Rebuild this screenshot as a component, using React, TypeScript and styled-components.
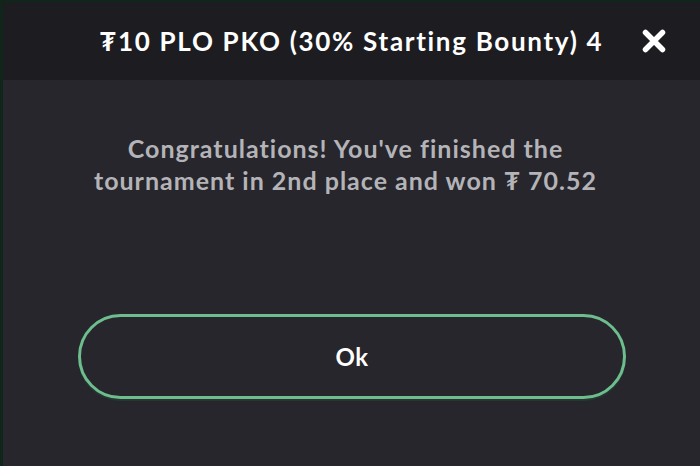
import React from "react";
import styled, { createGlobalStyle } from "styled-components";

const Global = createGlobalStyle`
  html, body { margin: 0; padding: 0; background: #0f2418; }
  body { font-family: Lato, "Noto Sans", sans-serif; -webkit-font-smoothing: antialiased; }
  * { box-sizing: border-box; }
`;

const Backdrop = styled.div`
  width: 700px;
  height: 466px;
  padding: 2px 0 0 3px;
  background: #10261a;
  overflow: hidden;
`;

const Modal = styled.div`
  width: 100%;
  height: 100%;
  display: flex;
  flex-direction: column;
  background: #26262c;
`;

const Header = styled.div`
  height: 78px;
  flex: none;
  display: grid;
  grid-template-columns: 1fr auto 1fr;
  align-items: center;
  background: #1c1c21;
`;

const Title = styled.h1`
  grid-column: 2;
  margin: 0;
  color: #ffffff;
  font-family: Lato, "Noto Sans", sans-serif;
  font-weight: 700;
  font-size: 26px;
  letter-spacing: 1.7px;
  white-space: nowrap;
`;

const CloseButton = styled.button`
  grid-column: 3;
  justify-self: start;
  margin-left: 38px;
  width: 26px;
  height: 26px;
  padding: 0;
  border: none;
  background: transparent;
  display: flex;
  align-items: center;
  justify-content: center;
  cursor: pointer;
`;

const Body = styled.div`
  flex: 1;
  display: flex;
  flex-direction: column;
  align-items: center;
  padding: 52px 40px 0 40px;
`;

const Message = styled.p`
  margin: 0 12px 0 0;
  color: #b4b4b8;
  font-family: Lato, "Noto Sans", sans-serif;
  font-weight: 700;
  font-size: 25px;
  letter-spacing: 1px;
  line-height: 32px;
  text-align: center;
  width: 530px;
`;

const OkButton = styled.button`
  margin-top: 118px;
  width: 548px;
  height: 85px;
  border: 3px solid #6dbd8e;
  border-radius: 43px;
  background: #26262c;
  color: #ffffff;
  font-family: Lato, "Noto Sans", sans-serif;
  font-weight: 700;
  font-size: 24px;
  letter-spacing: 0.5px;
  box-shadow: 0 2px 1px rgba(40, 90, 60, 0.35);
  cursor: pointer;
  margin-left: 1px;
`;

export default function App() {
  return (
    <>
      <Global />
      <Backdrop>
        <Modal>
          <Header>
            <Title>₮10 PLO PKO (30% Starting Bounty) 4</Title>
            <CloseButton aria-label="Close">
              <svg width="26" height="26" viewBox="0 0 26 26">
                <path
                  d="M4.5 4.5 L21.5 21.5 M21.5 4.5 L4.5 21.5"
                  stroke="#ffffff"
                  strokeWidth="5.5"
                  strokeLinecap="round"
                />
              </svg>
            </CloseButton>
          </Header>
          <Body>
            <Message>
              Congratulations! You've finished the tournament in 2nd place and won ₮ 70.52
            </Message>
            <OkButton>Ok</OkButton>
          </Body>
        </Modal>
      </Backdrop>
    </>
  );
}
